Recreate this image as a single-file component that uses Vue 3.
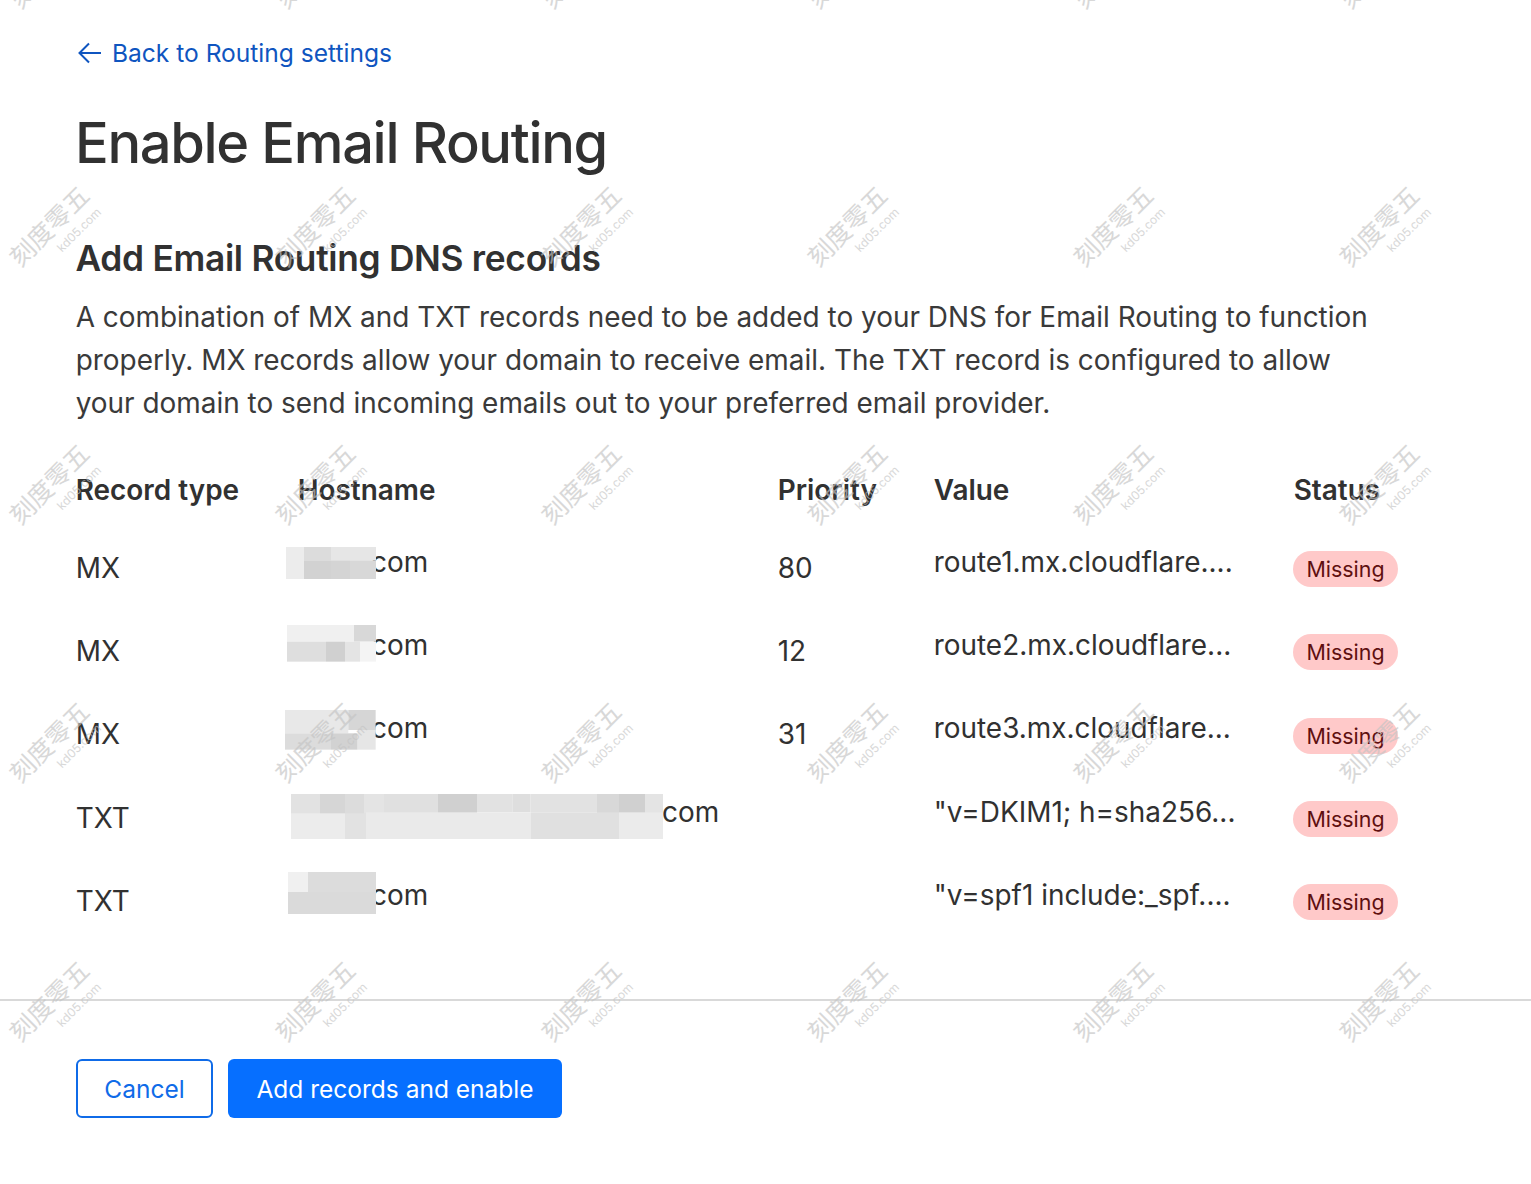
<script setup>
const records = [
  { type: 'MX', priority: '80', value: 'route1.mx.cloudflare....', dy: 1, blocks: [[0,0,54,96,'#ececec'],[54,0,81,42,'#dcdcdc'],[54,42,81,54,'#d2d2d2'],[135,0,135,40,'#e6e6e6'],[135,40,57,56,'#d4d4d4'],[192,40,78,56,'#d8d8d8']], w: 270, h: 96 },
  { type: 'MX', priority: '12', value: 'route2.mx.cloudflare...', dy: -1.5, blocks: [[0,0,201,50,'#f0f0f0'],[201,0,66,50,'#d8d8d8'],[0,50,117,60,'#dedede'],[117,50,57,60,'#d0d0d0'],[174,50,45,60,'#e4e4e4'],[219,50,48,60,'#f4f4f4']], w: 267, h: 110 },
  { type: 'MX', priority: '31', value: 'route3.mx.cloudflare...', dy: 2, blocks: [[0,0,190,70,'#e8e8e8'],[190,0,82,60,'#d6d6d6'],[0,70,138,49,'#dcdcdc'],[138,70,80,49,'#d2d2d2'],[218,60,54,59,'#e6e6e6']], w: 272, h: 119 },
  { type: 'TXT', priority: '', value: '"v=DKIM1; h=sha256...', dy: 4.5, blocks: [[0,0,87,60,'#e2e2e2'],[87,0,75,60,'#d6d6d6'],[162,0,57,60,'#dcdcdc'],[219,0,60,60,'#e4e4e4'],[279,0,162,70,'#e0e0e0'],[441,0,117,70,'#d0d0d0'],[558,0,106,55,'#e2e2e2'],[664,0,54,55,'#dedede'],[718,0,200,55,'#e2e2e2'],[918,0,66,58,'#d8d8d8'],[984,0,78,58,'#d0d0d0'],[1062,0,55,58,'#e4e4e4'],[0,58,162,77,'#ececec'],[162,58,63,77,'#e2e2e2'],[225,55,495,80,'#eaeaea'],[720,55,264,80,'#e0e0e0'],[984,55,133,80,'#ebebeb']], w: 1117, h: 135 },
  { type: 'TXT', priority: '', value: '"v=spf1 include:_spf....', dy: -1.5, blocks: [[0,0,60,60,'#f0f0f0'],[60,0,204,60,'#dcdcdc'],[0,60,264,66,'#dadada']], w: 264, h: 126 }
]

const watermarks = []
for (let row = 0; row < 5; row++) {
  for (let col = 0; col < 6; col++) {
    watermarks.push({ left: 6 + col * 266, top: -75.5 + row * 258.3 })
  }
}
</script>

<template>
  <div class="page">
    <a class="back" href="#">
      <svg class="back-icon" width="26" height="26" viewBox="0 0 26 26" fill="none" stroke="currentColor" stroke-width="2">
        <path d="M24 13H3" />
        <path d="M12 3.5 2.5 13l9.5 9.5" />
      </svg>
      <span>Back to Routing settings</span>
    </a>

    <h1>Enable Email Routing</h1>
    <h2>Add Email Routing DNS records</h2>
    <p class="intro">
      A combination of MX and TXT records need to be added to your DNS for Email Routing to function
      properly. MX records allow your domain to receive email. The TXT record is configured to allow
      your domain to send incoming emails out to your preferred email provider.
    </p>

    <div class="records">
      <div class="row head">
        <div>Record type</div>
        <div>Hostname</div>
        <div>Priority</div>
        <div>Value</div>
        <div>Status</div>
      </div>
      <div v-for="(rec, i) in records" :key="i" class="row">
        <div>{{ rec.type }}</div>
        <div class="host">
          <div class="slot" :class="{ long: rec.w > 500 }">
            <svg class="redact" :style="{ top: rec.dy + 'px' }" :width="rec.w / 3" :height="rec.h / 3" :viewBox="`0 0 ${rec.w} ${rec.h}`" preserveAspectRatio="none">
              <rect v-for="(b, j) in rec.blocks" :key="j" :x="b[0]" :y="b[1]" :width="b[2]" :height="b[3]" :fill="b[4]" />
            </svg>
          </div>
          <span>com</span>
        </div>
        <div>{{ rec.priority }}</div>
        <div class="value">{{ rec.value }}</div>
        <div class="status"><span class="badge">Missing</span></div>
      </div>
    </div>

    <div class="footer">
      <button class="btn cancel">Cancel</button>
      <button class="btn primary">Add records and enable</button>
    </div>

    <div class="watermarks">
      <div v-for="(m, i) in watermarks" :key="i" class="mark" :style="{ left: m.left + 'px', top: m.top + 'px' }">
        <span class="mark-cn">刻度零五</span>
        <span class="mark-en">kd05.com</span>
      </div>
    </div>
  </div>
</template>

<style scoped>
.page {
  position: relative;
  width: 1531px;
  height: 1184px;
  overflow: hidden;
  background: #fff;
  color: #313131;
  font-family: Inter, "Noto Sans", sans-serif;
}

.back {
  display: flex;
  align-items: center;
  gap: 9px;
  width: max-content;
  margin-left: 77px;
  padding-top: 37px;
  height: 32px;
  color: #0f55c0;
  font-size: 24.55px;
  line-height: 32px;
  text-decoration: none;
}

.back-icon {
  flex: none;
}

h1 {
  margin: 36px 0 0 75px;
  font-size: 56px;
  line-height: 76px;
  font-weight: 500;
  letter-spacing: -1.35px;
}

h2 {
  margin: 55px 0 0 75.5px;
  font-size: 35.3px;
  line-height: 46px;
  font-weight: 600;
  letter-spacing: -0.3px;
}

.intro {
  width: 1310px;
  margin: 14px 0 0 75.7px;
  font-size: 27.93px;
  line-height: 43px;
  color: #3a3a3a;
}

.records {
  margin: 45px 0 0 75.7px;
}

.row {
  display: grid;
  grid-template-columns: 222px 480px 156px 360px 200px;
  align-items: center;
  height: 83.3px;
  font-size: 27.93px;
}

.head {
  height: 40px;
  margin-bottom: 16px;
  font-weight: 600;
}

.host {
  display: flex;
  align-items: center;
  padding-bottom: 12px;
  margin-left: -11.7px;
}

.slot {
  display: flex;
  justify-content: flex-end;
  flex: none;
  width: 90px;
  margin-right: -5px;
}

.slot.long {
  width: 377px;
  margin-right: -1px;
}

.redact {
  display: block;
  flex: none;
  position: relative;
  z-index: 1;
}

.value {
  padding-bottom: 12px;
  white-space: nowrap;
}

.status {
  padding-top: 2px;
}

.badge {
  display: inline-block;
  padding: 0 13.5px;
  margin-left: -0.7px;
  height: 36px;
  line-height: 36px;
  border-radius: 18px;
  background: #ffc9c9;
  color: #5f1010;
  font-size: 21.4px;
}

.footer {
  display: flex;
  gap: 15px;
  margin-top: 57px;
  padding: 58px 0 0 76px;
  border-top: 2px solid #d9d9d9;
}

.btn {
  height: 59px;
  border-radius: 6px;
  font-family: inherit;
  font-size: 24.5px;
}

.cancel {
  width: 137px;
  border: 2px solid #0f6be8;
  background: #fff;
  color: #0f6be8;
}

.primary {
  width: 334px;
  border: none;
  background: #066fff;
  color: #fff;
}

.watermarks {
  position: absolute;
  inset: 0;
  z-index: 2;
  pointer-events: none;
}

.mark {
  position: absolute;
  width: 100px;
  height: 100px;
  color: #c4c4c4;
  opacity: 0.65;
}

.mark-cn {
  position: absolute;
  left: -8px;
  top: 27px;
  font-family: "Noto Sans CJK SC", sans-serif;
  font-size: 25px;
  line-height: 30px;
  white-space: nowrap;
  transform: rotate(-45deg);
}

.mark-en {
  position: absolute;
  left: 45px;
  top: 40px;
  font-size: 12px;
  line-height: 14px;
  white-space: nowrap;
  transform: rotate(-45deg);
}
</style>

<style>
html,
body {
  margin: 0;
  background: #fff;
}
</style>
